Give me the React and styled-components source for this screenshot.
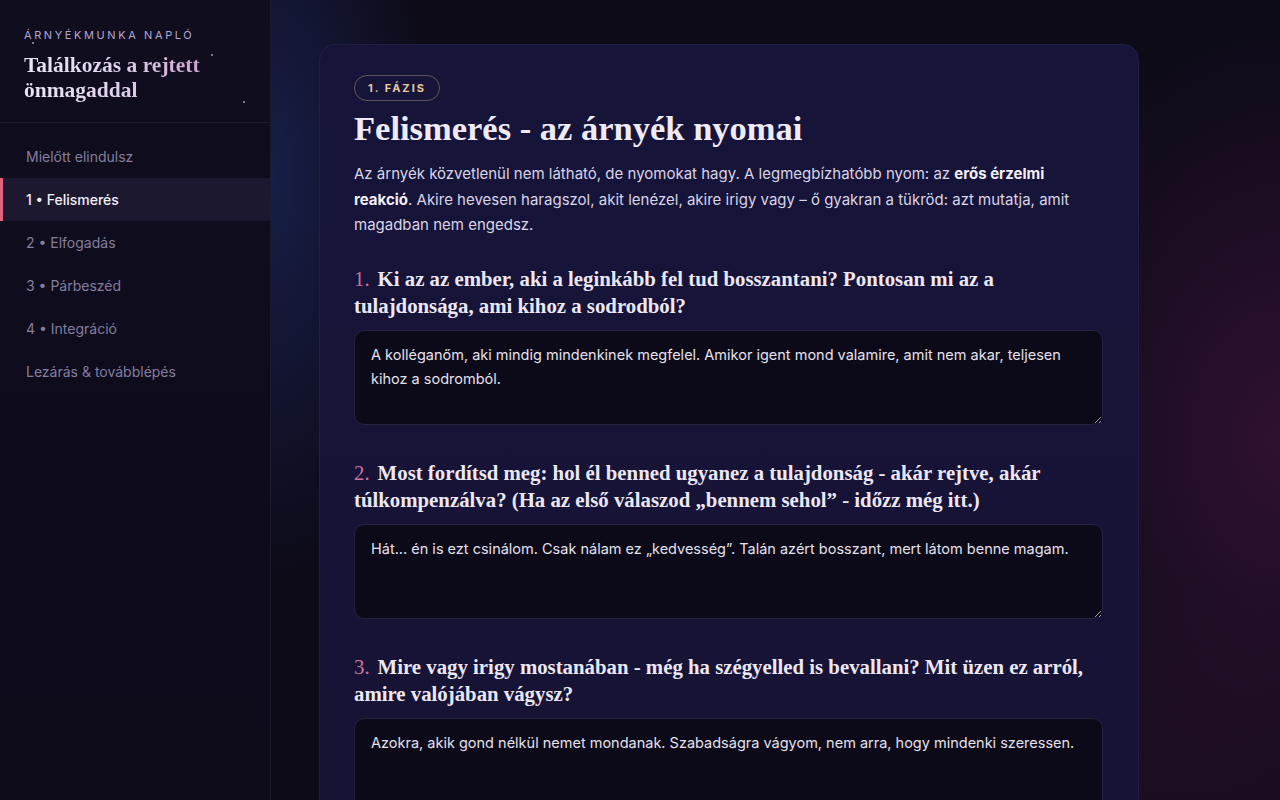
import React from 'react'
import styled, { createGlobalStyle } from 'styled-components'

const GlobalStyle = createGlobalStyle`
  html, body {
    margin: 0;
    padding: 0;
    height: 100%;
    background: #0d0b18;
    overflow: hidden;
  }
  * { box-sizing: border-box; }
`

const serif = `"Liberation Serif", "DejaVu Serif", serif`
const sans = `Inter, "Noto Sans", sans-serif`

const Layout = styled.div`
  display: grid;
  grid-template-columns: 271px 1fr;
  height: 800px;
  font-family: ${sans};
`

const Sidebar = styled.aside`
  position: relative;
  background: linear-gradient(180deg, #0f0d1e 0%, #0e0c1b 100%);
  border-right: 1px solid #1c1a2c;
  display: flex;
  flex-direction: column;
`

const Brand = styled.div`
  position: relative;
  padding: 28px 24px 19px 24px;
  border-bottom: 1px solid #1c1a2c;
`

const Kicker = styled.div`
  font-size: 11px;
  letter-spacing: 2.6px;
  text-transform: uppercase;
  color: #b2a6d4;
  margin-bottom: 11px;
  line-height: 14px;
`

const BrandTitle = styled.h1`
  margin: 0;
  font-family: ${serif};
  font-weight: 700;
  font-size: 21.5px;
  line-height: 25px;
  background: linear-gradient(90deg, #ece6f6 0%, #e0d2ec 45%, #cfa6d2 85%);
  -webkit-background-clip: text;
  background-clip: text;
  color: transparent;
  width: 205px;
`

const Star = styled.span`
  position: absolute;
  width: 1.5px;
  height: 1.5px;
  border-radius: 50%;
  background: #cfc8e8;
  opacity: 0.7;
`

const Nav = styled.nav`
  display: flex;
  flex-direction: column;
  padding-top: 12px;
`

const NavItem = styled.a`
  display: block;
  padding: 12px 26px 12px 23px;
  line-height: 19px;
  font-size: 14px;
  text-decoration: none;
  color: ${p => (p.$active ? '#f3effa' : '#847e9e')};
  font-weight: ${p => (p.$active ? 500 : 400)};
  background: ${p => (p.$active ? '#1c1830' : 'transparent')};
  border-left: 3px solid ${p => (p.$active ? '#e0627f' : 'transparent')};
`

const Main = styled.main`
  overflow: hidden;
  padding: 44px 48px;
  background:
    radial-gradient(ellipse 220px 560px at 0% 22%, rgba(30, 44, 104, 0.6), transparent 72%),
    radial-gradient(ellipse 380px 560px at 100% 55%, rgba(70, 20, 64, 0.6), transparent 75%),
    radial-gradient(ellipse 520px 300px at 80% 100%, rgba(54, 16, 50, 0.4), transparent 75%),
    #0d0b18;
`

const Card = styled.section`
  max-width: 820px;
  background: linear-gradient(180deg, #17143a 0%, #161334 100%);
  border: 1px solid #231f44;
  border-radius: 16px;
  padding: 30px 35px 40px 34px;
`

const Badge = styled.span`
  display: inline-block;
  padding: 5px 13px;
  border: 1px solid rgba(214, 180, 140, 0.4);
  border-radius: 999px;
  font-size: 11px;
  font-weight: 700;
  letter-spacing: 2px;
  color: #e6cb9a;
  line-height: 14px;
`

const Title = styled.h2`
  margin: 7px 0 13px;
  font-family: ${serif};
  font-weight: 700;
  font-size: 34.5px;
  line-height: 40px;
  color: #efeaf7;
`

const Lead = styled.p`
  margin: 0 0 27px;
  font-size: 15px;
  line-height: 25.5px;
  color: #d9d4e6;

  strong {
    color: #f3effa;
    font-weight: 700;
  }
`

const Question = styled.div`
  margin-bottom: 34px;
`

const Prompt = styled.h3`
  margin: 0 0 11px;
  font-family: ${serif};
  font-weight: 700;
  font-size: 20.8px;
  line-height: 27px;
  color: #ece7f5;
`

const Num = styled.span`
  color: #cc73a0;
  font-weight: 400;
  margin-right: 8px;
`

const Answer = styled.textarea`
  display: block;
  width: 100%;
  height: 95px;
  resize: vertical;
  padding: 12px 16px;
  background: #0c0a18;
  border: 1px solid #27233f;
  border-radius: 10px;
  font-family: ${sans};
  font-size: 14.5px;
  line-height: 24px;
  color: #e4e0ee;
  outline: none;
`

const phases = [
  'Mielőtt elindulsz',
  '1 • Felismerés',
  '2 • Elfogadás',
  '3 • Párbeszéd',
  '4 • Integráció',
  'Lezárás & továbblépés',
]

const questions = [
  {
    q: 'Ki az az ember, aki a leginkább fel tud bosszantani? Pontosan mi az a tulajdonsága, ami kihoz a sodrodból?',
    a: 'A kolléganőm, aki mindig mindenkinek megfelel. Amikor igent mond valamire, amit nem akar, teljesen kihoz a sodromból.',
  },
  {
    q: 'Most fordítsd meg: hol él benned ugyanez a tulajdonság - akár rejtve, akár túlkompenzálva? (Ha az első válaszod „bennem sehol” - időzz még itt.)',
    a: 'Hát... én is ezt csinálom. Csak nálam ez „kedvesség”. Talán azért bosszant, mert látom benne magam.',
  },
  {
    q: 'Mire vagy irigy mostanában - még ha szégyelled is bevallani? Mit üzen ez arról, amire valójában vágysz?',
    a: 'Azokra, akik gond nélkül nemet mondanak. Szabadságra vágyom, nem arra, hogy mindenki szeressen.',
  },
]

const stars = [
  { left: 32, top: 42 },
  { left: 211, top: 54 },
  { left: 243, top: 101 },
]

export default function App() {
  return (
    <>
      <GlobalStyle />
      <Layout>
        <Sidebar>
          <Brand>
            {stars.map((s, i) => (
              <Star key={i} style={{ left: s.left, top: s.top }} />
            ))}
            <Kicker>Árnyékmunka napló</Kicker>
            <BrandTitle>Találkozás a rejtett önmagaddal</BrandTitle>
          </Brand>
          <Nav>
            {phases.map((p, i) => (
              <NavItem key={p} href="#" $active={i === 1}>
                {p}
              </NavItem>
            ))}
          </Nav>
        </Sidebar>

        <Main>
          <Card>
            <Badge>1. FÁZIS</Badge>
            <Title>Felismerés - az árnyék nyomai</Title>
            <Lead>
              Az árnyék közvetlenül nem látható, de nyomokat hagy. A legmegbízhatóbb nyom: az{' '}
              <strong>erős érzelmi reakció</strong>. Akire hevesen haragszol, akit lenézel, akire irigy
              vagy – ő gyakran a tükröd: azt mutatja, amit magadban nem engedsz.
            </Lead>

            {questions.map((item, i) => (
              <Question key={i}>
                <Prompt>
                  <Num>{i + 1}.</Num>
                  {item.q}
                </Prompt>
                <Answer defaultValue={item.a} />
              </Question>
            ))}
          </Card>
        </Main>
      </Layout>
    </>
  )
}
